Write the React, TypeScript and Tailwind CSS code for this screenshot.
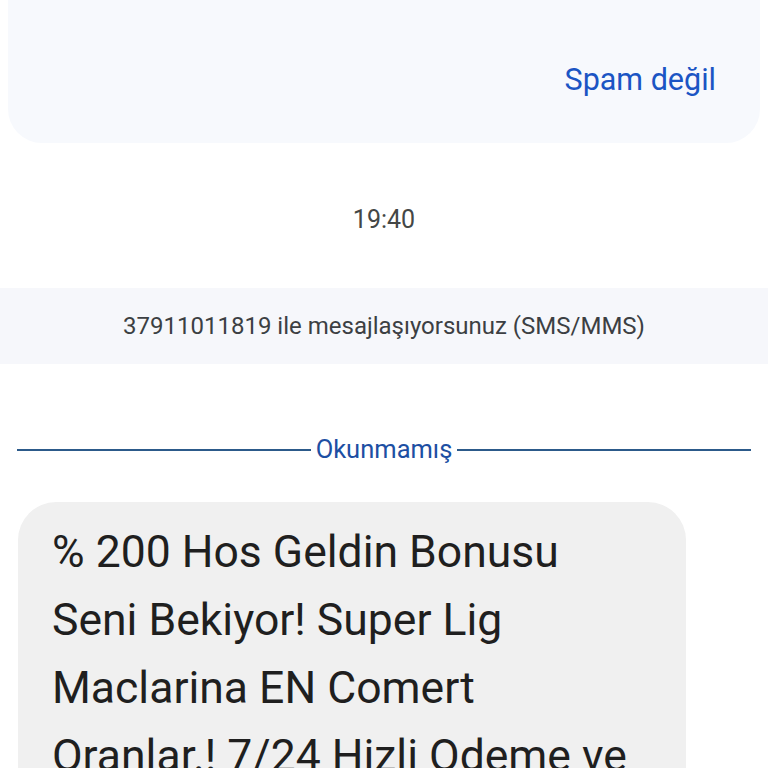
import React from 'react';

const font = { fontFamily: 'Roboto, "Noto Sans", sans-serif' };

const messageLines = [
  '% 200 Hos Geldin Bonusu',
  'Seni Bekiyor! Super Lig',
  'Maclarina EN Comert',
  'Oranlar.! 7/24 Hizli Odeme ve',
];

const App: React.FC = () => {
  return (
    <div className="w-[768px] h-[768px] overflow-hidden bg-white" style={font}>
      {/* spam warning card (scrolled up) */}
      <div className="mx-2 h-[143px] rounded-b-[34px] bg-[#f7f9fd] flex items-start justify-end pr-[44px] pt-[62px]">
        <button className="text-[30.5px] leading-[36px] text-[#1b55c4]">Spam değil</button>
      </div>

      <div className="pt-[63px] text-center text-[25px] leading-[28px] text-[#444746]">19:40</div>

      <div className="mt-[54px] h-[76px] bg-[#f6f7fb] flex items-center justify-center text-[24px] text-[#3c3f43]">
        37911011819 ile mesajlaşıyorsunuz (SMS/MMS)
      </div>

      <div className="mt-[72px] h-[28px] px-[17px] flex items-center gap-[5px]">
        <div className="flex-1 h-[2px] bg-[#2c5a8a]" />
        <span className="text-[25.5px] leading-none text-[#1d4fa3]">Okunmamış</span>
        <div className="flex-1 h-[2px] bg-[#2c5a8a]" />
      </div>

      <div className="mt-[38px] ml-[18px] w-[668px] rounded-[38px] bg-[#f0f0f0] pl-[34px] pt-[16px] pb-6">
        {messageLines.map((line) => (
          <div key={line} className="text-[44.5px] leading-[68px] text-[#1f1f1f] whitespace-nowrap">
            {line}
          </div>
        ))}
      </div>
    </div>
  );
};

export default App;
